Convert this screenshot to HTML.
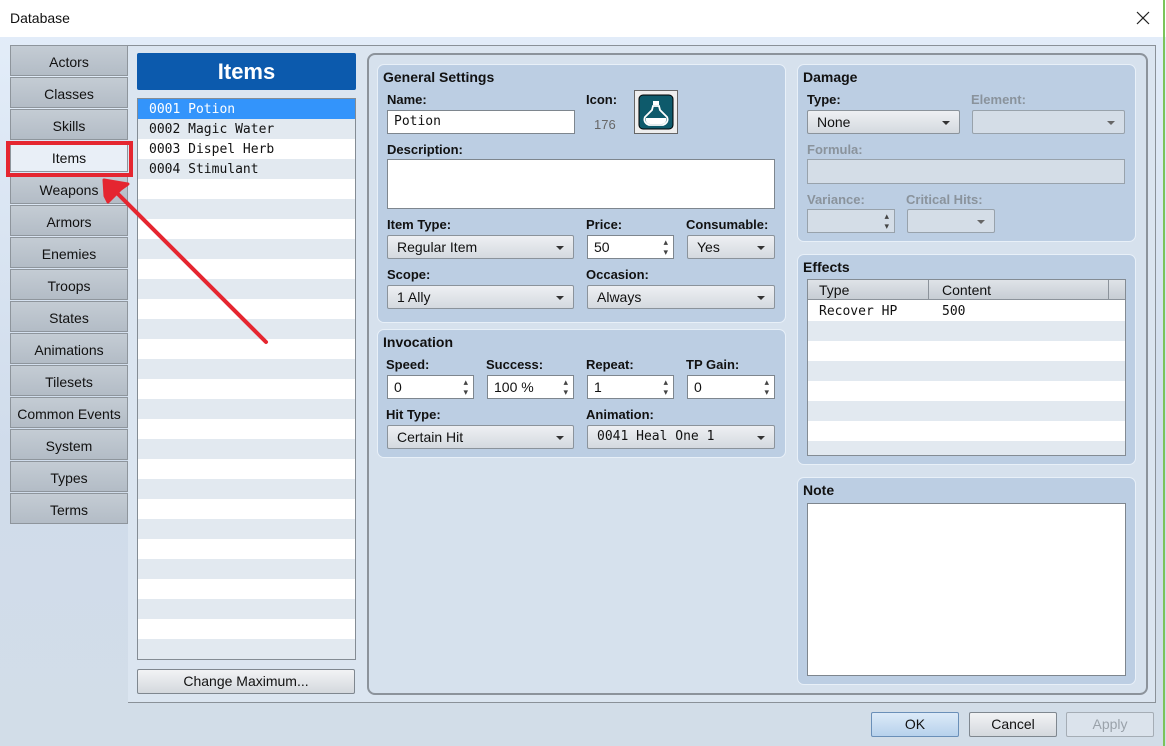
<!DOCTYPE html>
<html><head><meta charset="utf-8"><style>
*{box-sizing:border-box;margin:0;padding:0}
body{width:1166px;height:746px;position:relative;overflow:hidden;font-family:"Liberation Sans","DejaVu Sans",sans-serif;font-size:13px;color:#111;background:linear-gradient(#e4eefa,#d0dceb 60%,#d2dde8)}
.a{position:absolute}
.title{left:0;top:0;width:1166px;height:37px;background:#fff}
.tab{position:absolute;left:10px;width:118px;height:31px;background:linear-gradient(#c4ccd4,#b3bcc6);border:1px solid #8e959c;text-align:center;line-height:33px;font-size:14px}
.lbl{position:absolute;font-weight:bold;font-size:13px;color:#111}
.dis{color:#8a939c}
.grp{position:absolute;background:#bccee3;border:1px solid #e8f0f8;border-radius:7px}
.gt{position:absolute;left:5px;top:4px;font-weight:bold;font-size:14px}
.inp{position:absolute;height:24px;background:#fff;border:1px solid #7e868e;font-size:14px;line-height:22px;padding-left:6px}
.dd{position:absolute;height:24px;background:linear-gradient(#eef0f3,#d4d9df);border:1px solid #8b939b;border-radius:2px;font-size:14px;line-height:22px;padding-left:9px}
.dd:after{content:"";position:absolute;right:9px;top:10px;border-left:4px solid transparent;border-right:4px solid transparent;border-top:4px solid #333}
.ddd{background:#d4dde7;border-color:#98a2ab}
.ddd:after{border-top-color:#666}
.sp:after{content:"▴\A▾";white-space:pre;position:absolute;right:5px;top:1px;font-size:9px;line-height:10px;color:#444}
.mono{font-family:"DejaVu Sans Mono","Liberation Mono",monospace;font-size:13px}
.btn{position:absolute;height:25px;border:1px solid #7f878f;border-radius:2px;background:linear-gradient(#f2f3f5,#d4d8dd);text-align:center;line-height:23px;font-size:14px}
</style></head><body>
<div class="a title"></div>
<div class="a" style="left:10px;top:10px;font-size:14px">Database</div>
<svg class="a" style="left:1136px;top:11px" width="14" height="14"><path d="M1 1L13 13M13 1L1 13" stroke="#222" stroke-width="1.2"/></svg>
<div class="a" style="left:1163px;top:0;width:2px;height:746px;background:#7cc45a"></div>

<div class="a" style="left:128px;top:45px;width:1028px;height:658px;border:1px solid #8a9198;border-left:none;background:#dbe5f0"></div>

<div class="tab" style="top:45px">Actors</div>
<div class="tab" style="top:77px">Classes</div>
<div class="tab" style="top:109px">Skills</div>
<div class="tab" style="top:141px;background:#e9eff7">Items</div>
<div class="tab" style="top:173px">Weapons</div>
<div class="tab" style="top:205px">Armors</div>
<div class="tab" style="top:237px">Enemies</div>
<div class="tab" style="top:269px">Troops</div>
<div class="tab" style="top:301px">States</div>
<div class="tab" style="top:333px">Animations</div>
<div class="tab" style="top:365px">Tilesets</div>
<div class="tab" style="top:397px">Common Events</div>
<div class="tab" style="top:429px">System</div>
<div class="tab" style="top:461px">Types</div>
<div class="tab" style="top:493px">Terms</div>
<div class="a" style="left:6px;top:141px;width:127px;height:36px;border:4px solid #e52630"></div>

<div class="a" style="left:137px;top:53px;width:219px;height:37px;background:#0c5aad;border-radius:2px;color:#fff;font-weight:bold;font-size:22px;text-align:center;line-height:37px">Items</div>
<div class="a" style="left:137px;top:98px;width:219px;height:562px;border:1px solid #848c94;background:repeating-linear-gradient(#fff 0 20px,#e2e9f0 20px 40px)"></div>
<div class="a mono" style="left:138px;top:99px;width:217px;height:20px;background:#3394fb;color:#fff;line-height:21px;padding-left:11px">0001 Potion</div>
<div class="a mono" style="left:138px;top:119px;width:217px;height:20px;background:#e2e9f0;line-height:21px;padding-left:11px">0002 Magic Water</div>
<div class="a mono" style="left:138px;top:139px;width:217px;height:20px;background:#fff;line-height:21px;padding-left:11px">0003 Dispel Herb</div>
<div class="a mono" style="left:138px;top:159px;width:217px;height:20px;background:#e2e9f0;line-height:21px;padding-left:11px">0004 Stimulant</div>
<div class="btn" style="left:137px;top:669px;width:218px">Change Maximum...</div>

<svg class="a" style="left:0;top:0" width="400" height="400"><path d="M266 342L114 190" stroke="#e52630" stroke-width="4" stroke-linecap="round"/><path d="M104 180L128 184L121 189L108 202L105 196Z" fill="#e52630" stroke="#e52630" stroke-width="3" stroke-linejoin="round"/></svg>

<div class="a" style="left:367px;top:53px;width:781px;height:642px;border:2px solid #8c939b;border-radius:8px;background:#d6e1ed"></div>

<div class="grp" style="left:377px;top:64px;width:409px;height:259px">
<div class="gt">General Settings</div></div>
<div class="lbl" style="left:387px;top:92px">Name:</div>
<div class="inp mono" style="left:387px;top:110px;width:188px">Potion</div>
<div class="lbl" style="left:586px;top:92px">Icon:</div>
<div class="a" style="left:594px;top:117px;font-size:13px;color:#666">176</div>
<div class="a" style="left:634px;top:90px;width:44px;height:44px;border:1px solid #666;background:#eee"></div>
<svg class="a" style="left:638px;top:94px" width="36" height="36"><rect x="1" y="1" width="34" height="34" rx="4" fill="#0e5a6b" stroke="#000"/><path d="M15 7h6v4h-6z" fill="#fff"/><path d="M15 12h6l1 4 7 7c2 4-1 7-4 8H11c-3-1-6-4-4-8l7-7z" fill="none" stroke="#fff" stroke-width="1.8"/><path d="M8 24h20c1 3-1 6-4 6H12c-3 0-5-3-4-6z" fill="#fff"/></svg>
<div class="lbl" style="left:387px;top:142px">Description:</div>
<div class="a" style="left:387px;top:159px;width:388px;height:50px;background:#fff;border:1px solid #7e868e"></div>
<div class="lbl" style="left:387px;top:217px">Item Type:</div>
<div class="dd" style="left:387px;top:235px;width:187px">Regular Item</div>
<div class="lbl" style="left:586px;top:217px">Price:</div>
<div class="inp sp" style="left:587px;top:235px;width:87px">50</div>
<div class="lbl" style="left:686px;top:217px">Consumable:</div>
<div class="dd" style="left:687px;top:235px;width:88px">Yes</div>
<div class="lbl" style="left:387px;top:267px">Scope:</div>
<div class="dd" style="left:387px;top:285px;width:187px">1 Ally</div>
<div class="lbl" style="left:586px;top:267px">Occasion:</div>
<div class="dd" style="left:587px;top:285px;width:188px">Always</div>

<div class="grp" style="left:377px;top:329px;width:409px;height:129px">
<div class="gt">Invocation</div></div>
<div class="lbl" style="left:386px;top:357px">Speed:</div>
<div class="inp sp" style="left:387px;top:375px;width:87px">0</div>
<div class="lbl" style="left:486px;top:357px">Success:</div>
<div class="inp sp" style="left:487px;top:375px;width:87px">100 %</div>
<div class="lbl" style="left:586px;top:357px">Repeat:</div>
<div class="inp sp" style="left:587px;top:375px;width:87px">1</div>
<div class="lbl" style="left:686px;top:357px">TP Gain:</div>
<div class="inp sp" style="left:687px;top:375px;width:88px">0</div>
<div class="lbl" style="left:386px;top:407px">Hit Type:</div>
<div class="dd" style="left:387px;top:425px;width:187px">Certain Hit</div>
<div class="lbl" style="left:586px;top:407px">Animation:</div>
<div class="dd mono" style="left:587px;top:425px;width:188px">0041 Heal One 1</div>

<div class="grp" style="left:797px;top:64px;width:339px;height:178px">
<div class="gt">Damage</div></div>
<div class="lbl" style="left:807px;top:92px">Type:</div>
<div class="dd" style="left:807px;top:110px;width:153px">None</div>
<div class="lbl dis" style="left:971px;top:92px">Element:</div>
<div class="dd ddd" style="left:972px;top:110px;width:153px"></div>
<div class="lbl dis" style="left:807px;top:142px">Formula:</div>
<div class="a" style="left:807px;top:159px;width:318px;height:25px;background:#d4dde7;border:1px solid #98a2ab"></div>
<div class="lbl dis" style="left:807px;top:192px">Variance:</div>
<div class="inp sp" style="left:807px;top:209px;width:88px;background:#d4dde7;border-color:#98a2ab"></div>
<div class="lbl dis" style="left:906px;top:192px">Critical Hits:</div>
<div class="dd ddd" style="left:907px;top:209px;width:88px"></div>

<div class="grp" style="left:797px;top:254px;width:339px;height:211px">
<div class="gt">Effects</div></div>
<div class="a" style="left:807px;top:279px;width:319px;height:177px;border:1px solid #848c94;background:repeating-linear-gradient(#fff 0 20px,#e2e9f0 20px 40px);background-position:0 21px"></div>
<div class="a" style="left:808px;top:280px;width:317px;height:20px;background:linear-gradient(#dfe3e8,#c7cdd4);border-bottom:1px solid #8c939b;font-size:14px;line-height:21px"><span style="position:absolute;left:11px">Type</span><span style="position:absolute;left:120px;top:0;height:19px;border-left:1px solid #8c939b"></span><span style="position:absolute;left:134px">Content</span><span style="position:absolute;left:300px;top:0;height:19px;border-left:1px solid #8c939b"></span></div>
<div class="a mono" style="left:808px;top:301px;width:317px;height:20px;background:#fff;line-height:21px"><span style="position:absolute;left:11px">Recover HP</span><span style="position:absolute;left:134px">500</span></div>

<div class="grp" style="left:797px;top:477px;width:339px;height:208px">
<div class="gt">Note</div></div>
<div class="a" style="left:807px;top:503px;width:319px;height:173px;background:#fff;border:1px solid #7e868e"></div>

<div class="btn" style="left:871px;top:712px;width:88px;background:linear-gradient(#dceaf8,#b7d1ec);border-color:#6a8fb8">OK</div>
<div class="btn" style="left:969px;top:712px;width:88px">Cancel</div>
<div class="btn" style="left:1066px;top:712px;width:88px;background:#dbe3ec;border-color:#a5adb5;color:#9aa2aa">Apply</div>
</body></html>
